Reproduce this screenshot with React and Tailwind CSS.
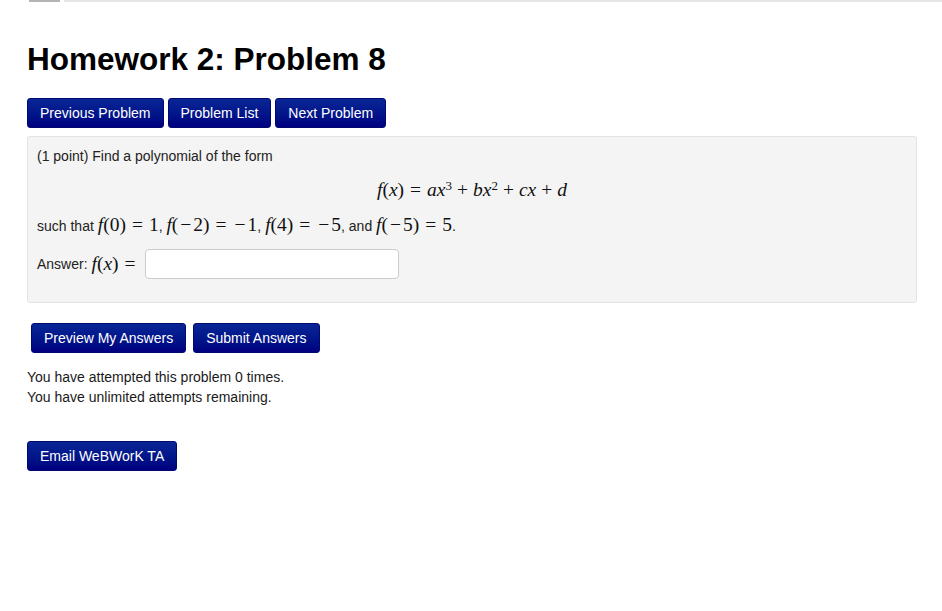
import React from 'react';

const Btn = ({ children, className = '' }) => (
  <button
    className={`h-[30px] rounded-[3px] border border-[#000a6e] bg-gradient-to-b from-[#0a2596] to-[#000080] px-[12px] text-[14px] text-white ${className}`}
  >
    {children}
  </button>
);

const M = ({ children }) => (
  <span className="font-['Liberation_Serif',serif] text-[19.5px] leading-[18px] text-[#111]">{children}</span>
);
const I = ({ children }) => <i className="italic">{children}</i>;
const Eq = () => <span className="mx-[6px]">=</span>;
const Plus = () => <span className="mx-[5px]">+</span>;
const Minus = () => <span className="px-[2px]">−</span>;

const App = () => {
  return (
    <div className="min-h-screen bg-white font-['Liberation_Sans',Arial,sans-serif] text-[#1a1a1a]">
      <div className="flex h-[2px]">
        <div className="ml-[29px] w-[31px] bg-[#b4b4b4]" />
        <div className="ml-[4px] flex-1 bg-[#e6e6e6]" />
      </div>

      <div className="pl-[27px] pr-[25px]">
        <h1 className="mt-[38px] text-[31.5px] font-bold leading-[38px] text-black">Homework 2: Problem 8</h1>

        <div className="mt-[20px] flex gap-[4px]">
          <Btn>Previous Problem</Btn>
          <Btn>Problem List</Btn>
          <Btn>Next Problem</Btn>
        </div>

        <div className="mt-[8px] rounded-[3px] border border-[#e3e3e3] bg-[#f4f4f4] px-[9px] pt-[10px] pb-[23px] text-[14px] leading-[18px] text-[#222]">
          <p className="h-[18px]">(1 point) Find a polynomial of the form</p>
          <div className="mt-[16px] h-[18px] text-center">
            <M>
              <I>f</I>(<I>x</I>)<Eq /><I>ax</I>
              <sup className="text-[13px]">3</sup>
              <Plus /><I>bx</I>
              <sup className="text-[13px]">2</sup>
              <Plus /><I>cx</I><Plus /><I>d</I>
            </M>
          </div>
          <p className="mt-[17px] h-[18px]">
            such that{' '}
            <M>
              <I>f</I>(0)<Eq />1
            </M>
            ,{' '}
            <M>
              <I>f</I>(<Minus />2)<Eq /><Minus />1
            </M>
            ,{' '}
            <M>
              <I>f</I>(4)<Eq /><Minus />5
            </M>
            , and{' '}
            <M>
              <I>f</I>(<Minus />5)<Eq />5
            </M>
            .
          </p>
          <div className="mt-[15px] flex h-[30px] items-center">
            <span>Answer:&nbsp;</span>
            <M>
              <I>f</I>(<I>x</I>)<Eq />
            </M>
            <input
              type="text"
              className="ml-[3px] h-[30px] w-[254px] rounded-[4px] border border-[#cccccc] bg-white px-[6px] outline-none"
            />
          </div>
        </div>

        <div className="mt-[20px] ml-[4px] flex gap-[7px]">
          <Btn>Preview My Answers</Btn>
          <Btn>Submit Answers</Btn>
        </div>

        <div className="mt-[14px] text-[14px] leading-[20px] text-[#1a1a1a]">
          <p>You have attempted this problem 0 times.</p>
          <p>You have unlimited attempts remaining.</p>
        </div>

        <div className="mt-[34px]">
          <Btn>Email WeBWorK TA</Btn>
        </div>
      </div>
    </div>
  );
};

export default App;
